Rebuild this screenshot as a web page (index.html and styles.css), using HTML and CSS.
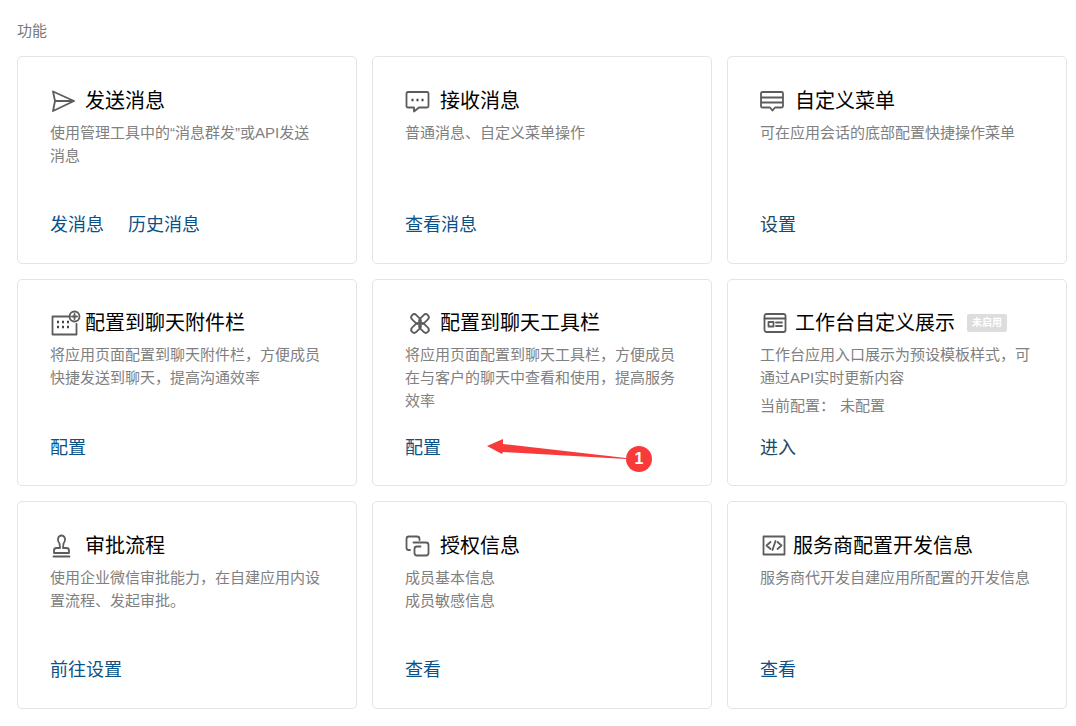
FILE: index.html
```html
<!DOCTYPE html>
<html lang="zh-CN">
<head>
<meta charset="utf-8">
<title>功能</title>
<link rel="stylesheet" href="styles.css">
</head>
<body>
<main class="page">
  <h2 class="section-label">功能</h2>
  <div class="grid">
    <section class="card">
      <h3 class="card-title"><span class="icon-box"><svg class="icon" width="26" height="26" viewBox="0 0 26 26"><path d="M3 3.500 L24 13 L3 23 L5 13 Z M5 13 H24"/></svg></span>发送消息</h3>
      <p class="desc">使用管理工具中的“消息群发”或API发送消息</p>
      <div class="links"><a class="link">发消息</a><a class="link">历史消息</a></div>
    </section>
    <section class="card">
      <h3 class="card-title"><span class="icon-box"><svg class="icon" width="26" height="26" viewBox="0 0 26 26"><path d="M3 4 H22 Q23.500 4 23.500 5.500 V18 Q23.500 19.500 22 19.500 H14 L9 23.500 V19.500 H3 Q1.500 19.500 1.500 18 V5.500 Q1.500 4 3 4 Z"/><path class="dots" d="M6.500 12 h2 M11.500 12 h2 M16.500 12 h2"/></svg></span>接收消息</h3>
      <p class="desc">普通消息、自定义菜单操作</p>
      <div class="links"><a class="link">查看消息</a></div>
    </section>
    <section class="card">
      <h3 class="card-title"><span class="icon-box"><svg class="icon" width="26" height="26" viewBox="0 0 26 26"><path d="M2.500 4 H21.500 Q23 4 23 5.500 V18 Q23 19.500 21.500 19.500 H15 L12.500 22.500 L10 19.500 H2.500 Q1 19.500 1 18 V5.500 Q1 4 2.500 4 Z M1 9.500 H23 M1 14.500 H23"/></svg></span>自定义菜单</h3>
      <p class="desc">可在应用会话的底部配置快捷操作菜单</p>
      <div class="links"><a class="link link-dark">设置</a></div>
    </section>

    <section class="card">
      <h3 class="card-title"><span class="icon-box"><svg class="icon icon-wide" width="32" height="28" viewBox="0 0 32 28"><path d="M20 7.500 H2.500 V25.500 H26.500 V15"/><path class="dots" d="M7 13 h2 M12 13 h2 M17 13 h2 M7 18 h2 M12 18 h2 M17 18 h2"/><circle cx="24.500" cy="7.500" r="5"/><path d="M24.500 5 v5 M22 7.500 h5"/></svg></span>配置到聊天附件栏</h3>
      <p class="desc">将应用页面配置到聊天附件栏，方便成员快捷发送到聊天，提高沟通效率</p>
      <div class="links"><a class="link">配置</a></div>
    </section>
    <section class="card">
      <h3 class="card-title"><span class="icon-box"><svg class="icon" width="26" height="26" viewBox="0 0 26 26"><rect x="5.500" y="6" width="11" height="6" rx="3" transform="rotate(45 11 9)"/><rect x="13.500" y="6" width="11" height="6" rx="3" transform="rotate(-45 19 9)"/><rect x="5.500" y="15" width="11" height="6" rx="3" transform="rotate(-45 11 18)"/><rect x="13.500" y="15" width="11" height="6" rx="3" transform="rotate(45 19 18)"/></svg></span>配置到聊天工具栏</h3>
      <p class="desc">将应用页面配置到聊天工具栏，方便成员在与客户的聊天中查看和使用，提高服务效率</p>
      <div class="links"><a class="link">配置</a></div>
    </section>
    <section class="card">
      <h3 class="card-title"><span class="icon-box"><svg class="icon" width="26" height="26" viewBox="0 0 26 26"><rect x="4.500" y="4" width="21" height="18" rx="2"/><path d="M4.500 8.500 H25.500 M16 12.500 H22 M16 16 H22"/><rect x="8.500" y="12" width="5" height="4.500"/></svg></span>工作台自定义展示<span class="badge">未启用</span></h3>
      <p class="desc">工作台应用入口展示为预设模板样式，可通过API实时更新内容</p>
      <p class="desc meta"><span class="meta-key">当前配置：</span>未配置</p>
      <div class="links"><a class="link link-dark">进入</a></div>
    </section>

    <section class="card">
      <h3 class="card-title"><span class="icon-box"><svg class="icon" width="26" height="26" viewBox="0 0 26 26"><path d="M6.500 15 H10 L9.500 10.500 Q7.500 8 8 5.500 Q9 2.500 11.500 2.500 Q14 2.500 15 5.500 Q15.500 8 13.500 10.500 L13 15 H16.500 Q19 15 19 17.500 V20 H4 V17.500 Q4 15 6.500 15 Z M3.500 23.500 H19.500"/></svg></span>审批流程</h3>
      <p class="desc">使用企业微信审批能力，在自建应用内设置流程、发起审批。</p>
      <div class="links"><a class="link">前往设置</a></div>
    </section>
    <section class="card">
      <h3 class="card-title"><span class="icon-box"><svg class="icon" width="26" height="26" viewBox="0 0 26 26"><path d="M5 17 H3.500 Q1.500 17 1.500 14.500 V6 Q1.500 3.500 4 3.500 H12 Q14.500 3.500 14.500 6 V7"/><path d="M8.500 9.500 H21 Q23.500 9.500 23.500 12 V20 Q23.500 22.500 21 22.500 H12 Q9.500 22.500 9.500 20 V16 Q9.500 13.500 12 13.500 H15.500"/></svg></span>授权信息</h3>
      <p class="desc">成员基本信息<br>成员敏感信息</p>
      <div class="links"><a class="link">查看</a></div>
    </section>
    <section class="card">
      <h3 class="card-title title-tight"><span class="icon-box"><svg class="icon" width="26" height="26" viewBox="0 0 26 26"><rect x="3.500" y="3.500" width="21" height="18"/><path d="M10.500 9 L6.500 12.500 L10.500 16 M17.500 9 L21.500 12.500 L17.500 16 M15.500 8 L12.500 17"/></svg></span>服务商配置开发信息</h3>
      <p class="desc">服务商代开发自建应用所配置的开发信息</p>
      <div class="links"><a class="link">查看</a></div>
    </section>
  </div>

  <svg class="arrow" width="145" height="24" viewBox="0 0 145 24"><polygon points="0,8 16,1 16,6 139,20 139,21 16,14 15,16"/></svg>
  <span class="step-badge">1</span>
</main>
</body>
</html>
```
FILE: styles.css
```css
* { box-sizing: border-box; }
html, body { margin: 0; padding: 0; background: #fff; }
body {
  width: 1076px;
  height: 726px;
  overflow: hidden;
  font-family: "Liberation Sans", "Noto Sans CJK SC", sans-serif;
}
.page { position: relative; padding: 20px 9px 0 17px; }
.section-label {
  margin: 0;
  font-size: 15px;
  line-height: 22px;
  font-weight: 400;
  color: #787878;
  height: 11px;
}
.grid {
  margin-top: 25.1px;
  display: grid;
  grid-template-columns: repeat(3, 340px);
  grid-auto-rows: 207.5px;
  gap: 15px;
}
.card {
  display: flex;
  flex-direction: column;
  border: 1px solid #e4e4e4;
  border-radius: 5px;
  padding: 29.8px 32px 24.5px;
  background: #fff;
}
.card-title {
  margin: 0 0 6px;
  display: flex;
  align-items: center;
  font-size: 20px;
  line-height: 28px;
  font-weight: 400;
  color: #000;
  white-space: nowrap;
}
.icon-box { width: 35px; height: 28px; display: flex; align-items: center; flex: none; }
.title-tight .icon-box { width: 33px; }
.icon { fill: none; stroke: #5c5c5c; stroke-width: 1.8; stroke-linejoin: round; stroke-linecap: round; overflow: visible; }
.icon .dots { stroke: #444; stroke-width: 2.4; stroke-linecap: butt; }
.badge {
  margin-left: 12px;
  width: 40px;
  height: 18px;
  background: #ddd;
  border-radius: 2px;
  color: #fff;
  font-size: 10px;
  line-height: 18px;
  font-weight: 700;
  text-align: center;
}
.desc {
  margin: 0;
  font-size: 15px;
  line-height: 23px;
  color: #808080;
}
.meta { margin-top: 5px; }
.meta-key { margin-right: 5px; }
.links {
  margin-top: auto;
  display: flex;
  gap: 24px;
}
.link {
  font-size: 18px;
  line-height: 26px;
  color: #0a5288;
}
.link-dark { color: #1c4a63; }
.arrow { position: absolute; left: 487px; top: 438px; }
.arrow polygon { fill: #f93a3a; }
.step-badge {
  position: absolute;
  left: 626px;
  top: 446px;
  width: 26px;
  height: 26px;
  border-radius: 50%;
  background: #f93a3a;
  color: #fff;
  font-size: 16px;
  line-height: 26px;
  font-weight: 700;
  text-align: center;
}
```
